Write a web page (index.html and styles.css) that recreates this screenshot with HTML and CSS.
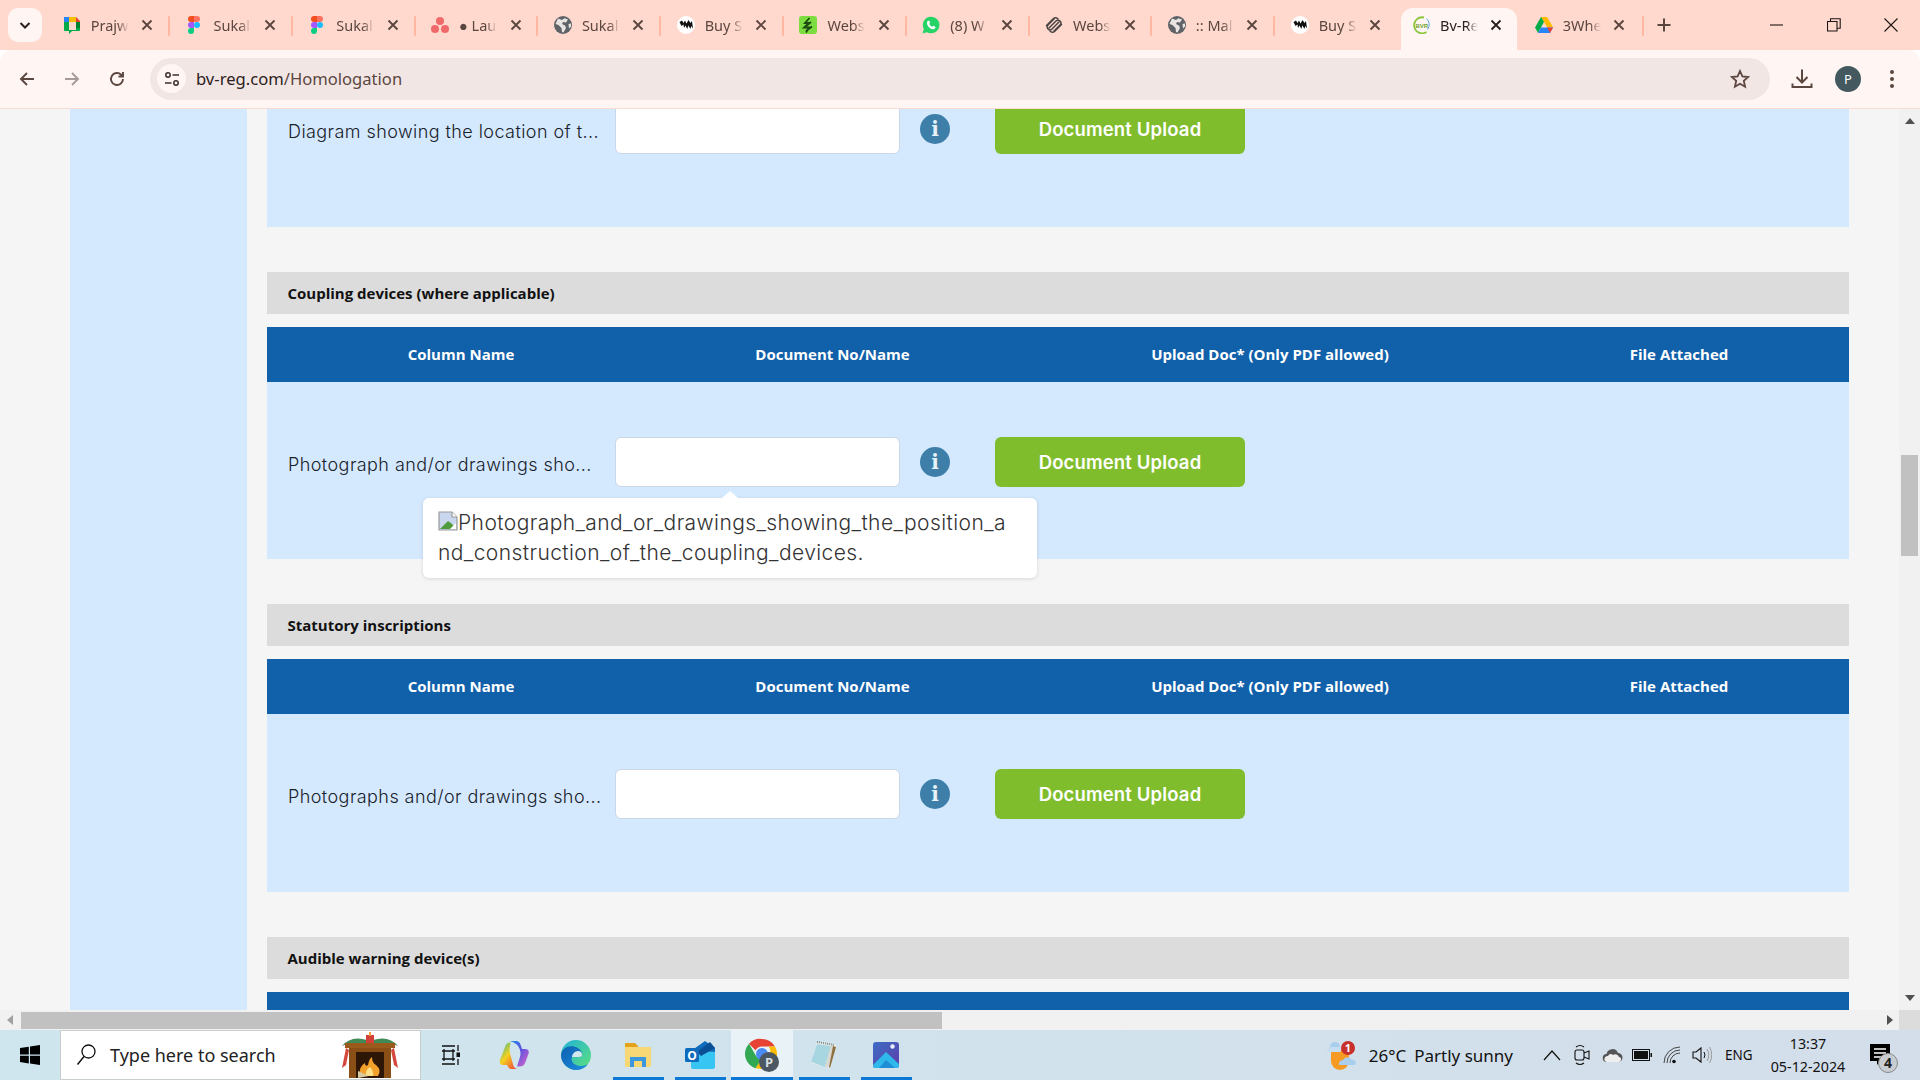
FILE: index.html
```html
<!DOCTYPE html>
<html lang="en">
<head>
<meta charset="utf-8">
<title>Bv-Reg Homologation</title>
<link rel="stylesheet" href="styles.css">
</head>
<body>
<svg class="defs" width="0" height="0">
  <symbol id="x" viewBox="0 0 16 16"><path d="M3.500 3.500l9 9M12.500 3.500l-9 9" fill="none" stroke="currentColor" stroke-width="1.900"/></symbol>
  <symbol id="figma" viewBox="0 0 12 18"><path d="M6 0H3a3 3 0 0 0 0 6h3z" fill="#f24e1e"/><path d="M6 0h3a3 3 0 0 1 0 6H6z" fill="#ff7262"/><path d="M6 6H3a3 3 0 0 0 0 6h3z" fill="#a259ff"/><circle cx="9" cy="9" r="3" fill="#1abcfe"/><path d="M3 12h3v3a3 3 0 1 1-3-3z" fill="#0acf83"/></symbol>
  <symbol id="globe" viewBox="0 0 18 18"><circle cx="9" cy="9" r="9" fill="#5f6368"/><path d="M4 2.500l4 1.500 2.500-1.800L14 3.500 12 6.500 9 6 8 8l3 1.500 1 2.500-2.500 4.500-1.500-.5-.5-4L4.500 9 1.500 8z" fill="#e8e4e2"/><path d="M14.500 8l2.500-.5v3l-2 2z" fill="#e8e4e2"/></symbol>
  <symbol id="ink" viewBox="0 0 18 18"><circle cx="9" cy="9" r="9" fill="#fff"/><path d="M2.500 6l2.500-1.500L6.500 7 8 4.500l1.500 3L11.500 4l2 3 1.500-2 1 7.500-1.800-2.500-.7 3-2.200-3.500-1 3.500-1.800-3.500-1.500 2.500-.5-3.500-2 1.500z" fill="#111"/></symbol>
</svg>

<header class="tabstrip">
  <button class="tabsearch"><svg width="14" height="14" viewBox="0 0 14 14"><path d="M2.500 5l4.500 4.500L11.500 5" fill="none" stroke="#2b2120" stroke-width="2"/></svg></button>
  <div class="tab sep"><svg class="fav" viewBox="0 0 18 18"><path d="M1 1h5v5H1z" fill="#2684fc"/><path d="M6 1h7v5H6z" fill="#fbbc04"/><path d="M13 1l4 4v1h-4z" fill="#ea4335"/><path d="M1 6h5v6H1z" fill="#00ac47"/><path d="M13 6h4v8h-4z" fill="#00832d"/><path d="M1 12h5v2h7v-2h4v2a1 1 0 0 1-1 1H9l-3 3v-3H2a1 1 0 0 1-1-1z" fill="#00ac47"/></svg><span class="title">Prajw</span><svg class="close"><use href="#x"/></svg></div>
  <div class="tab sep"><svg class="fav"><use href="#figma"/></svg><span class="title">Sukal</span><svg class="close"><use href="#x"/></svg></div>
  <div class="tab sep"><svg class="fav"><use href="#figma"/></svg><span class="title">Sukal</span><svg class="close"><use href="#x"/></svg></div>
  <div class="tab sep"><svg class="fav" viewBox="0 0 18 18"><circle cx="9" cy="5" r="4" fill="#f0696a"/><circle cx="4" cy="13" r="4" fill="#f0696a"/><circle cx="14" cy="13" r="4" fill="#f0696a"/></svg><span class="title">● Lau</span><svg class="close"><use href="#x"/></svg></div>
  <div class="tab sep"><svg class="fav"><use href="#globe"/></svg><span class="title">Sukal</span><svg class="close"><use href="#x"/></svg></div>
  <div class="tab sep"><svg class="fav"><use href="#ink"/></svg><span class="title">Buy S</span><svg class="close"><use href="#x"/></svg></div>
  <div class="tab sep"><svg class="fav" viewBox="0 0 18 18"><rect width="18" height="18" rx="3" fill="#7ddc3f"/><path d="M10.500 2L6 7h4L5 11.500h5L7 16.500M12 6L6 11M13 10.500l-6 4.500" fill="none" stroke="#1c4a12" stroke-width="1.800"/></svg><span class="title">Webs</span><svg class="close"><use href="#x"/></svg></div>
  <div class="tab sep"><svg class="fav" viewBox="0 0 18 18"><path d="M.500 17.500l1.300-4.600A8.300 8.300 0 1 1 5 16.200z" fill="#25d366"/><path d="M6.300 4.800c-.4 0-1.300.7-1.300 2.100 0 3 3.300 6.300 6.200 6.300 1.500 0 2.200-1 2.200-1.600l-.1-.8-2-1-.9 1c-1.200-.4-2.600-1.700-3.100-3.100l.8-.9-.8-2z" fill="#fff"/></svg><span class="title">(8) W</span><svg class="close"><use href="#x"/></svg></div>
  <div class="tab sep"><svg class="fav" viewBox="0 0 18 18"><g fill="none" stroke="#4b4644" stroke-width="1.500" stroke-linecap="round"><path d="M1.500 9.500L8.500 2.500A2.800 2.800 0 0 1 12.500 2.500L13 3"/><path d="M4 12L11 5A2.800 2.800 0 0 1 15 9L9 15"/><path d="M16.500 8.500L9.500 15.500A2.800 2.800 0 0 1 5.500 15.500L5 15"/><path d="M14 6L7 13A2.800 2.800 0 0 1 3 9L9 3"/></g></svg><span class="title">Webs</span><svg class="close"><use href="#x"/></svg></div>
  <div class="tab sep"><svg class="fav"><use href="#globe"/></svg><span class="title">:: Mal</span><svg class="close"><use href="#x"/></svg></div>
  <div class="tab"><svg class="fav"><use href="#ink"/></svg><span class="title">Buy S</span><svg class="close"><use href="#x"/></svg></div>
  <div class="tab active"><svg class="fav" viewBox="0 0 18 18"><path d="M12 1.500a8 8 0 1 0 2.500 14.500" fill="none" stroke="#8cc63f" stroke-width="1.800"/><path d="M14.500 2.500a8 8 0 0 1 1 11" fill="none" stroke="#5aa7e0" stroke-width="1"/><text x="3.500" y="11.500" class="bvr">BVR</text></svg><span class="title">Bv-Re</span><svg class="close"><use href="#x"/></svg></div>
  <div class="tab sep last"><svg class="fav" viewBox="0 0 18 16"><path d="M6 0h6l6 10h-6z" fill="#ffba00"/><path d="M6 0l3 5-6 11-3-5.500z" fill="#00ac47"/><path d="M3 16h12l3-5.500H6z" fill="#2684fc"/><path d="M12 10.500h6L15 16z" fill="#ea4335"/></svg><span class="title">3Whe</span><svg class="close"><use href="#x"/></svg></div>
  <svg class="plus" width="14" height="14" viewBox="0 0 14 14"><path d="M7 .500v13M.500 7h13" stroke="#5b4640" stroke-width="2"/></svg>
  <div class="winctl">
    <svg width="14" height="14" viewBox="0 0 14 14"><path d="M0 7h13" stroke="#1d1513" stroke-width="1.100"/></svg>
    <svg width="14" height="14" viewBox="0 0 14 14"><path d="M.500 3.500h9.500v9.500H.500zM3.500 3.500V.800h9.700v9.500h-3" fill="none" stroke="#1d1513" stroke-width="1.100"/></svg>
    <svg width="14" height="14" viewBox="0 0 14 14"><path d="M.500.500l13 13M13.500.500l-13 13" stroke="#1d1513" stroke-width="1.100"/></svg>
  </div>
</header>

<nav class="toolbar">
  <svg class="navicon" viewBox="0 0 18 18"><path d="M16 9H3M9 3L3 9l6 6" fill="none" stroke="#5b4640" stroke-width="1.900"/></svg>
  <svg class="navicon dim" viewBox="0 0 18 18"><path d="M2 9h13M9 3l6 6-6 6" fill="none" stroke="#a89a96" stroke-width="1.900"/></svg>
  <svg class="navicon" viewBox="0 0 18 18"><path d="M15 9a6 6 0 1 1-1.800-4.300L15 6.500M15 2v4.500h-4.500" fill="none" stroke="#5b4640" stroke-width="1.900"/></svg>
  <div class="omnibox">
    <span class="siteinfo"><svg width="16" height="16" viewBox="0 0 16 16"><circle cx="4" cy="4" r="2.200" fill="none" stroke="#3d2e2a" stroke-width="1.500"/><path d="M8.500 4H15M1 12h6.500" stroke="#3d2e2a" stroke-width="1.500"/><circle cx="12" cy="12" r="2.200" fill="none" stroke="#3d2e2a" stroke-width="1.500"/></svg></span>
    <span class="url">bv-reg.com<span class="urlpath">/Homologation</span></span>
    <svg class="star" width="20" height="20" viewBox="0 0 20 20"><path d="M10 2l2.400 5.400 5.800.6-4.400 3.900 1.300 5.800L10 14.700l-5.100 3 1.300-5.800L1.800 8l5.800-.6z" fill="none" stroke="#5b4640" stroke-width="1.800"/></svg>
  </div>
  <svg class="download" width="22" height="22" viewBox="0 0 22 22"><path d="M11 1.500V14M5.500 9l5.500 5.500L16.500 9M1.500 15.500v3.500h19v-3.500" fill="none" stroke="#5b4640" stroke-width="2"/></svg>
  <span class="avatar">P</span>
  <svg class="dots" width="6" height="20" viewBox="0 0 6 20"><circle cx="3" cy="3" r="2" fill="#5b4640"/><circle cx="3" cy="10" r="2" fill="#5b4640"/><circle cx="3" cy="17" r="2" fill="#5b4640"/></svg>
</nav>

<div class="viewport">
  <aside class="sidebar"></aside>
  <main class="content">
    <section class="doc doc-clipped">
      <div class="doc-body">
        <div class="row">
          <span class="label">Diagram showing the location of t...</span>
          <input class="docno" type="text" aria-label="Document number">
          <span class="info">i</span>
          <button class="upload">Document Upload</button>
        </div>
      </div>
    </section>

    <section class="doc">
      <h3 class="doc-title">Coupling devices (where applicable)</h3>
      <div class="doc-head"><span>Column Name</span><span>Document No/Name</span><span>Upload Doc* (Only PDF allowed)</span><span>File Attached</span></div>
      <div class="doc-body">
        <div class="row">
          <span class="label">Photograph and/or drawings sho...</span>
          <input class="docno" type="text" aria-label="Document number">
          <span class="info">i</span>
          <button class="upload">Document Upload</button>
        </div>
        <div class="tooltip"><svg class="broken" width="20" height="20" viewBox="0 0 20 20"><path d="M1 1h13l5 5v13H1z" fill="#c9d7ee" stroke="#9a9a9a" stroke-width="1.200"/><path d="M14 1v5h5" fill="#fff" stroke="#9a9a9a" stroke-width="1.200"/><path d="M2 18l8-8 4 3 4 5z" fill="#4f9a3a"/><path d="M12 18l6-6v6z" fill="#fff"/></svg>Photograph_and_or_drawings_showing_the_position_a<br>nd_construction_of_the_coupling_devices.</div>
      </div>
    </section>

    <section class="doc">
      <h3 class="doc-title">Statutory inscriptions</h3>
      <div class="doc-head"><span>Column Name</span><span>Document No/Name</span><span>Upload Doc* (Only PDF allowed)</span><span>File Attached</span></div>
      <div class="doc-body">
        <div class="row">
          <span class="label">Photographs and/or drawings sho...</span>
          <input class="docno" type="text" aria-label="Document number">
          <span class="info">i</span>
          <button class="upload">Document Upload</button>
        </div>
      </div>
    </section>

    <section class="doc">
      <h3 class="doc-title">Audible warning device(s)</h3>
      <div class="doc-head"></div>
    </section>
  </main>
  <div class="vscroll">
    <span class="arrow up"></span>
    <span class="vthumb"></span>
    <span class="arrow down"></span>
  </div>
</div>

<div class="hscroll">
  <span class="arrow left"></span>
  <span class="hthumb"></span>
  <span class="arrow right"></span>
  <span class="corner"></span>
</div>

<footer class="taskbar">
  <div class="start"><svg width="20" height="20" viewBox="0 0 20 20"><path d="M0 3l8.800-1.300v7.800H0zM10 1.500L20 0v9.500H10zM0 10.700h8.800v7.700L0 17.100zM10 10.700h10V20l-10-1.500z" fill="#000"/></svg></div>
  <div class="searchbox">
    <svg width="22" height="24" viewBox="0 0 22 24"><circle cx="13.500" cy="8.500" r="6.500" fill="none" stroke="#111" stroke-width="1.300"/><path d="M9 13.500L2.500 21.500" stroke="#111" stroke-width="1.500"/></svg>
    <span class="searchtext">Type here to search</span>
    <svg class="fireplace" width="62" height="46" viewBox="0 0 62 46"><path d="M3 14q9-11 25-6v4H8zM59 14q-9-11-25-6v4h20z" fill="#3f8a55"/><path d="M27 3h8v9h-8z" fill="#d2403a"/><path d="M30 0h2v4h-2z" fill="#f2a03a"/><path d="M6 11h50v5H6z" fill="#9a5a1c"/><path d="M10 16h42v30H10z" fill="#8a4f16"/><path d="M17 20h28v26H17z" fill="#2e1606"/><path d="M21 44q-2-9 5-13 0 4 3 2 1-6 4-8 0 6 4 8 6 5 2 11z" fill="#f2a02c"/><path d="M27 44q-1-6 4-9 4 4 3 9z" fill="#fde18a"/><path d="M19 39l11 5-11 2z" fill="#d9c9a0"/><path d="M7 16l-4 20 4-3 3-15zM55 16l4 20-4-3-3-15z" fill="#d3493d"/></svg>
  </div>
  <div class="tbtn"><svg width="22" height="22" viewBox="0 0 22 22"><path d="M1 2h13M1 20h13M3 5v12M12 5v12M1 7h13M1 15h13M17 1v6M17 15v6" fill="none" stroke="#111" stroke-width="1.300"/><rect x="15.500" y="8.500" width="3.500" height="4.500" fill="#111"/></svg></div>
  <div class="tbtn"><svg width="30" height="28" viewBox="0 0 30 28"><defs><linearGradient id="cop1" x1="0" y1="0" x2="1" y2="1"><stop offset="0" stop-color="#1a8fe8"/><stop offset=".45" stop-color="#5a50e0"/><stop offset="1" stop-color="#e46ac8"/></linearGradient><linearGradient id="cop2" x1="0" y1="0" x2=".8" y2="1"><stop offset="0" stop-color="#2fb89a"/><stop offset=".5" stop-color="#f5d01f"/><stop offset="1" stop-color="#f0503a"/></linearGradient></defs><path d="M11 0h6c2.500 0 3.800 1.200 4.500 3.500L23 8h3c3 0 4.500 2 3.500 4.800L26.500 21c-1 3-3 4.500-6 4.500H18l3-9.500c1-3.500.5-6-1-9.500C19 4.500 17 2 11 0z" fill="url(#cop1)"/><path d="M11.500 1.500C8.500 1.500 7 3 6 6L1 19c-1 3 .5 5 3.500 5H8l1.500 2.500c.8 1 2 1.500 3.500 1.500h6c-2.500 0-4-1.500-4.800-4L11 12c-1-4 .5-8 .5-10.500z" fill="url(#cop2)"/></svg></div>
  <div class="tbtn"><svg width="32" height="32" viewBox="0 0 32 32"><defs><linearGradient id="edge1" x1="0" y1="0" x2="1" y2="1"><stop offset="0" stop-color="#1fb2d8"/><stop offset="1" stop-color="#5fe07a"/></linearGradient><linearGradient id="edge2" x1="0" y1="0" x2="1" y2="1"><stop offset="0" stop-color="#0c5fb0"/><stop offset="1" stop-color="#1e8fe0"/></linearGradient></defs><circle cx="16" cy="16" r="15" fill="url(#edge1)"/><path d="M1 16c1-8 10-11 17-7 5 3 5 9 1 9h-7c-2 5 3 9 9 9 3 0 5-1 7-2-3 4-7 6-12 6C8 31 1 24 1 16z" fill="url(#edge2)"/><path d="M12 18c0-3 3-6 6-6 3 0 4 2 4 4 0 1-1 2-3 2z" fill="#d2e6ee"/></svg></div>
  <div class="tbtn running"><svg width="28" height="26" viewBox="0 0 28 26"><path d="M1 2a1 1 0 0 1 1-1h9l3 3v6H1z" fill="#e3a21a"/><path d="M1 5h25a1 1 0 0 1 1 1v18a1 1 0 0 1-1 1H2a1 1 0 0 1-1-1z" fill="#f8d775"/><path d="M6 25V15h16v10h-4v-6h-8v6z" fill="#3c97dd"/></svg></div>
  <div class="tbtn running"><svg width="30" height="28" viewBox="0 0 30 28"><path d="M6 10L20 0l10 7v4z" fill="#0f6cbd"/><path d="M6 11h24v15a2 2 0 0 1-2 2H8a2 2 0 0 1-2-2z" fill="#37c6f4"/><path d="M12 11L25 1l5 6-14 8z" fill="#0a4f96"/><rect x="0" y="7" width="14" height="14" rx="1.500" fill="#0f6cbd"/><text x="7" y="18.500" class="olook">O</text></svg></div>
  <div class="tbtn running current"><svg width="34" height="34" viewBox="0 0 34 34"><g transform="translate(2 1)"><path d="M15 0a15 15 0 0 1 13 7.500H15a7.500 7.500 0 0 0-6.500 3.800L2 4.800A15 15 0 0 1 15 0z" fill="#e64335"/><path d="M2 4.800l6.500 11.200a7.500 7.500 0 0 0 6.500 3.800l-6.500 9.500A15 15 0 0 1 2 4.800z" fill="#33a853"/><path d="M28 7.500A15 15 0 0 1 15 30l-6.500-.7L15 19.800a7.500 7.500 0 0 0 6.500-12.300z" fill="#fbbc04"/><circle cx="15" cy="15" r="6" fill="#4a8af4"/></g><circle cx="24" cy="24" r="10" fill="#4b5863"/><text x="24" y="29" class="chromep">P</text></svg></div>
  <div class="tbtn running"><svg width="28" height="28" viewBox="0 0 28 28"><path d="M7 1l19 3-6 23L1 22z" fill="#f1f1ee"/><path d="M7 3l14 2-6 21L1 21z" fill="#a7d6e0"/><path d="M21 4l3 1-5 21h-4z" fill="#d8d8d2"/><path d="M7 1l17 3" stroke="#7d8a8a" stroke-width="2" stroke-dasharray="1 1"/><path d="M23 5l3 1-6 21-1-1z" fill="#8f6f3f"/></svg></div>
  <div class="tbtn running"><svg width="26" height="26" viewBox="0 0 26 26"><defs><linearGradient id="ph1" x1="0" y1="0" x2="1" y2="1"><stop offset="0" stop-color="#3c6cc4"/><stop offset="1" stop-color="#5e3dab"/></linearGradient></defs><rect width="26" height="26" rx="3" fill="url(#ph1)"/><circle cx="19.500" cy="4.500" r="2.200" fill="#e9eef8"/><path d="M0 23L13 10l13 12v2a2 2 0 0 1-2 2H2a2 2 0 0 1-2-2z" fill="#2fb8ea"/><path d="M6 26l7-8 9 8z" fill="#1e8fd6"/></svg></div>
  <div class="tray">
    <svg class="weather" width="31" height="30" viewBox="0 0 31 30"><path d="M5 9h18v12a9 9 0 0 1-18 0z" fill="#f59a23"/><circle cx="9" cy="7" r="5" fill="#a9cdec"/><path d="M1 11a4 4 0 0 1 4-4h9a3 3 0 0 1 0 5H3z" fill="#c5dcf1"/><path d="M13 25a4 4 0 0 1 4-5 5 5 0 0 1 9 0 3 3 0 0 1 3 5z" fill="#a9cdec"/><circle cx="22" cy="8" r="7" fill="#c8302b"/><text x="22" y="12" class="wbadge">1</text></svg>
    <span class="temp">26°C</span>
    <span class="sky">Partly sunny</span>
    <span class="ticon chev"><svg width="18" height="12" viewBox="0 0 18 12"><path d="M1 11l8-9 8 9" fill="none" stroke="#111" stroke-width="1.200"/></svg></span>
    <span class="ticon"><svg width="16" height="24" viewBox="0 0 16 24"><rect x="1" y="7" width="9" height="10" rx="2" fill="none" stroke="#111" stroke-width="1.100"/><path d="M10 10l5-2v8l-5-2M2 4q4-3 8 0M2 20q4 3 8 0" fill="none" stroke="#111" stroke-width="1.100"/></svg></span>
    <span class="ticon"><svg width="21" height="16" viewBox="0 0 21 16"><path d="M5 15a4 4 0 0 1-.5-8 6 6 0 0 1 11.500-1 4.500 4.500 0 0 1 0 9z" fill="#555"/><path d="M5 15a3 3 0 0 1 1-6 3 3 0 0 1 5-1 4 4 0 0 1 6 2 2.500 2.500 0 0 1-1 5z" fill="#eee"/></svg></span>
    <span class="ticon"><svg width="20" height="12" viewBox="0 0 20 12"><rect x=".500" y=".500" width="17" height="11" fill="none" stroke="#111"/><rect x="2" y="2" width="14" height="8" fill="#111"/><path d="M18.500 4h1.500v4h-1.500z" fill="#111"/></svg></span>
    <span class="ticon"><svg width="18" height="18" viewBox="0 0 18 18"><path d="M1 17A16 16 0 0 1 17 1M4 17A13 13 0 0 1 17 4M7 17A10 10 0 0 1 17 7" fill="none" stroke="#444" stroke-width="1"/><circle cx="11" cy="15.500" r="1.800" fill="#111"/></svg></span>
    <span class="ticon"><svg width="20" height="20" viewBox="0 0 20 20"><path d="M1 7h3l5-4v14l-5-4H1z" fill="none" stroke="#111" stroke-width="1.100"/><path d="M12 7q2 3 0 6" fill="none" stroke="#111"/><path d="M15 4q3.500 6 0 12M17.500 2q4.500 8 0 16" fill="none" stroke="#999"/></svg></span>
    <span class="lang">ENG</span>
    <span class="clock"><span>13:37</span><span>05-12-2024</span></span>
    <span class="notif">
      <svg width="20" height="22" viewBox="0 0 20 22"><path d="M0 0h20v17H10l-3 4v-4H0z" fill="#000"/><path d="M4 5h12M4 9h12M4 13h12" stroke="#fff" stroke-width="1.300"/></svg>
      <span class="notif-badge">4</span>
    </span>
  </div>
</footer>
</body>
</html>
```

FILE: styles.css
```css
* { box-sizing: border-box; }
html, body { margin: 0; height: 100%; overflow: hidden; }
body {
  display: flex;
  flex-direction: column;
  height: 1080px;
  font-family: "Noto Sans", sans-serif;
  color: #222;
}
.defs { position: absolute; }

/* tab strip */
.tabstrip {
  flex: 0 0 50px;
  display: flex;
  align-items: center;
  background: #ffd9cd;
  padding-left: 8px;
  position: relative;
}
.tabsearch {
  width: 34px;
  height: 34px;
  margin-right: 5.2px;
  border: 0;
  padding: 0;
  border-radius: 10px;
  background: #fff6f3;
  display: flex;
  align-items: center;
  justify-content: center;
}
.tab {
  flex: 0 0 122.8px;
  height: 50px;
  position: relative;
  display: flex;
  align-items: center;
  padding-left: 15.5px;
  color: #5b4640;
  font-size: 14.5px;
}
.tab.active, .tab.last { padding-left: 14px; }
.tab.sep::after {
  content: "";
  position: absolute;
  right: 0;
  top: 16px;
  width: 2px;
  height: 20px;
  background: #ffb7a1;
  border-radius: 1px;
}
.tab.active::before {
  content: "";
  position: absolute;
  left: 3px;
  right: 4px;
  top: 8px;
  bottom: 0;
  background: #fff6f3;
  border-radius: 12px 12px 0 0;
}
.tab.active { color: #2b2120; }
.tab.active > * { position: relative; }
.fav { width: 18px; height: 18px; flex: none; }
.title {
  width: 38px;
  margin-left: 10px;
  white-space: nowrap;
  -webkit-mask-image: linear-gradient(90deg, #000 70%, transparent);
  mask-image: linear-gradient(90deg, #000 70%, transparent);
}
.close { width: 16px; height: 16px; flex: none; margin-left: 10.5px; color: #5b4640; }
.tab.active .close { color: #2b2120; margin-left: 10px; }
.tab.last .close { margin-left: 10px; }
.bvr { font-family: "Liberation Sans", sans-serif; font-size: 6px; font-weight: 700; fill: #6e9f2c; }
.plus { margin-left: 13px; flex: none; }
.winctl {
  margin-left: auto;
  width: 128px;
  margin-right: 22px;
  display: flex;
  justify-content: space-between;
}

/* toolbar */
.toolbar {
  flex: 0 0 59px;
  display: flex;
  align-items: center;
  background: #fff6f3;
  border-bottom: 1px solid #f8dcd3;
  border-radius: 12px 12px 0 0;
  padding-left: 18px;
  padding-bottom: 1px;
}
.navicon { width: 18px; height: 18px; margin-right: 27px; flex: none; }
.navicon:nth-child(3) { margin-right: 24px; }
.omnibox {
  flex: 0 0 1620px;
  height: 42px;
  border-radius: 21px;
  background: #f2e6e5;
  display: flex;
  align-items: center;
  padding-left: 7px;
  padding-right: 20px;
}
.siteinfo {
  width: 29px;
  height: 29px;
  border-radius: 50%;
  background: #fff6f3;
  display: flex;
  align-items: center;
  justify-content: center;
  flex: none;
}
.url { margin-left: 10px; font-size: 16.6px; color: #2b2120; }
.urlpath { color: #5b4640; }
.star { margin-left: auto; flex: none; }
.download { margin-left: 21px; flex: none; }
.avatar {
  width: 26px;
  height: 26px;
  margin-left: 22px;
  border-radius: 50%;
  background: #43595f;
  color: #fff;
  font-size: 13px;
  display: flex;
  align-items: center;
  justify-content: center;
  flex: none;
}
.dots { margin-left: 28px; flex: none; }

/* page */
.viewport {
  flex: 0 0 901px;
  display: flex;
  overflow: hidden;
  background: #f5f5f5;
  padding-left: 70px;
}
.sidebar { flex: 0 0 177px; background: #d4e8fe; }
.content { flex: 0 0 1582px; margin-left: 20px; margin-top: -59.4px; }
.doc { margin-bottom: 45px; }
.doc-title {
  margin: 0 0 13px;
  height: 42px;
  padding-left: 20.5px;
  display: flex;
  align-items: center;
  background: #dcdcdc;
  font: 700 15px "Open Sans", sans-serif;
  color: #111;
}
.doc-head {
  height: 55px;
  padding-bottom: 2px;
  display: grid;
  grid-template-columns: 388px 355px 520px 298px;
  align-items: center;
  justify-items: center;
  background: #1160aa;
  color: #fff;
  font: 700 15px "Open Sans", sans-serif;
}
.doc-body {
  height: 177.4px;
  padding-top: 55px;
  background: #d4e8fe;
  position: relative;
}
.doc-clipped .doc-body { padding-top: 54.4px; }
.row { display: flex; align-items: center; padding-left: 20px; }
.label {
  flex: 0 0 328px;
  padding-top: 4px;
  padding-left: 1px;
  font-family: Inter, sans-serif;
  font-size: 18px;
  font-weight: 300;
  letter-spacing: .43px;
  color: #18222a;
  white-space: nowrap;
}
.docno {
  flex: 0 0 285px;
  height: 50px;
  border: 1px solid #c9d7e8;
  border-radius: 6px;
  background: #fff;
}
.info {
  flex: none;
  width: 30px;
  height: 30px;
  margin: 0 45px 0 20px;
  border-radius: 50%;
  background: #3d7fa9;
  color: #e8f2f8;
  font: 700 20px/30px "DejaVu Serif", serif;
  text-align: center;
}
.upload {
  flex: 0 0 250px;
  height: 50px;
  border: 0;
  border-radius: 6px;
  background: #80bd2d;
  color: #fff;
  font-family: Inter, sans-serif;
  font-size: 18.5px;
  font-weight: 600;
  letter-spacing: .15px;
}
.tooltip {
  position: absolute;
  left: 156px;
  top: 116px;
  width: 614px;
  height: 80px;
  padding: 10px 15px;
  background: #fff;
  border-radius: 6px;
  box-shadow: 0 1px 4px rgba(0, 0, 0, .12);
  font-family: Inter, sans-serif;
  font-size: 21px;
  font-weight: 300;
  letter-spacing: .42px;
  line-height: 30px;
  color: #333;
  white-space: nowrap;
}
.tooltip::before {
  content: "";
  position: absolute;
  left: 299px;
  top: -7px;
  border: 8px solid transparent;
  border-top: 0;
  border-bottom: 7px solid #fff;
}
.broken { vertical-align: -1px; }

/* scrollbars */
.vscroll {
  flex: 0 0 21px;
  margin-left: auto;
  background: #f1f1f1;
  display: flex;
  flex-direction: column;
  align-items: center;
  padding-top: 9px;
  padding-bottom: 9px;
}
.arrow { width: 0; height: 0; border: 5px solid transparent; flex: none; }
.arrow.up { border-top: 0; border-bottom: 6px solid #505050; }
.arrow.down { border-bottom: 0; border-top: 6px solid #505050; margin-top: auto; }
.arrow.left { border-left: 0; border-right: 6px solid #a0a0a0; margin-left: 7px; }
.arrow.right { border-right: 0; border-left: 6px solid #505050; margin-left: auto; margin-right: 6px; }
.vthumb { width: 17px; height: 101px; margin-top: 331px; background: #c1c1c1; flex: none; }
.hscroll {
  flex: 0 0 20px;
  display: flex;
  align-items: center;
  background: #f1f1f1;
}
.hthumb { width: 921px; height: 17px; margin-left: 8px; margin-top: 1px; background: #c1c1c1; flex: none; }
.corner { width: 21px; height: 20px; background: #dcdcdc; flex: none; }

/* taskbar */
.taskbar {
  flex: 0 0 50px;
  display: flex;
  align-items: stretch;
  background: linear-gradient(90deg, #cfe6ee, #d3deea);
  color: #111;
}
.start { flex: 0 0 60px; display: flex; align-items: center; justify-content: center; }
.searchbox {
  flex: 0 0 361px;
  display: flex;
  align-items: center;
  background: #fff;
  border: 1px solid #c8cdd0;
  padding-left: 14px;
  padding-right: 19px;
}
.searchtext { margin-left: 13px; font-size: 18px; color: #222; white-space: nowrap; }
.fireplace { margin-left: auto; flex: none; }
.tbtn {
  flex: 0 0 62px;
  display: flex;
  align-items: center;
  justify-content: center;
  position: relative;
}
.tbtn.running::after {
  content: "";
  position: absolute;
  left: 5.5px;
  right: 5.5px;
  bottom: 0;
  height: 3px;
  background: #0a78d4;
}
.tbtn.current { background: #e9f3f7; }
.tbtn.current::after { left: 0; right: 0; }
.olook { font: 700 12px "Open Sans", sans-serif; fill: #fff; text-anchor: middle; }
.chromep { font: 700 13px "Noto Sans", sans-serif; fill: #d8dde0; text-anchor: middle; }
.wbadge { font: 700 11px "Noto Sans", sans-serif; fill: #fff; text-anchor: middle; }
.tray {
  margin-left: auto;
  display: flex;
  align-items: center;
  padding-right: 26px;
}
.weather { flex: none; }
.temp { margin-left: 12px; font-size: 17px; white-space: nowrap; }
.sky { margin-left: 8px; margin-right: 24px; font-size: 17px; white-space: nowrap; }
.ticon { flex: 0 0 30px; display: flex; align-items: center; justify-content: center; }
.lang { flex: 0 0 29px; margin-left: 8px; font-size: 13.5px; white-space: nowrap; }
.clock {
  flex: 0 0 76px;
  margin-left: 16px;
  display: flex;
  flex-direction: column;
  align-items: center;
  gap: 4px;
  font-size: 14.3px;
  line-height: 19px;
  white-space: nowrap;
}
.notif {
  flex: 0 0 28px;
  margin-left: 20px;
  display: flex;
  justify-content: center;
  position: relative;
}
.notif-badge {
  position: absolute;
  left: 12px;
  top: 9px;
  width: 20px;
  height: 20px;
  border-radius: 50%;
  background: #c8cdd2;
  border: 1px solid #888;
  font-size: 14px;
  line-height: 18px;
  text-align: center;
  font-weight: 700;
  color: #222;
}
```
